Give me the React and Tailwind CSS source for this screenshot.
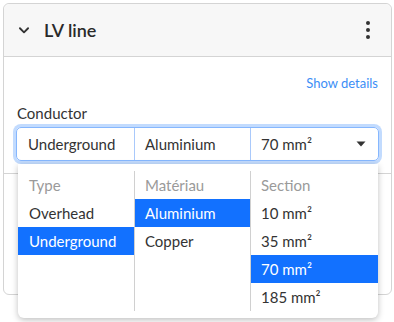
import React from "react";

const font = { fontFamily: "Lato, 'Open Sans', sans-serif" };

function Col({ title, items, selected, first, last }) {
  return (
    <div className={`flex flex-col ${last ? "flex-1" : "border-r border-[#d0d0d0]"} ${first ? "w-[117px]" : last ? "" : "w-[116px]"}`}>
      <div className={`h-[28px] flex items-center text-[15px] text-[#9a9a9a] ${first ? "pl-[11px]" : "pl-[10px]"}`}>{title}</div>
      {items.map((it) => (
        <div
          key={it}
          className={`h-[28px] flex items-center text-[15px] ${first ? "pl-[11px]" : "pl-[10px]"} ${it === selected ? "bg-[#1271ff] text-white" : "text-[#333333]"}`}
        >
          {it}
        </div>
      ))}
    </div>
  );
}

export default function App() {
  return (
    <div className="w-[394px] h-[322px] bg-white overflow-hidden pt-[3px] pl-[3px] pr-[2px]" style={font}>
      <div className="h-[292px] border border-[#d4d4d4] rounded-[6px] overflow-visible">
        <div className="h-[53px] bg-[#f7f7f7] border-b border-[#d4d4d4] rounded-t-[6px] flex items-center pl-[13px] pr-[21px]">
          <svg width="14" height="14" viewBox="0 0 24 24" fill="none" stroke="#333" strokeWidth="3.2" strokeLinecap="round" strokeLinejoin="round">
            <path d="M5 9l7 7 7-7" />
          </svg>
          <span className="ml-[13px] text-[18px] font-semibold text-[#2a2a2a]">LV line</span>
          <div className="ml-auto flex flex-col gap-[3px] items-center">
            <span className="w-[4px] h-[4px] rounded-full bg-[#333]" />
            <span className="w-[4px] h-[4px] rounded-full bg-[#333]" />
            <span className="w-[4px] h-[4px] rounded-full bg-[#333]" />
          </div>
        </div>
        <div className="px-[12px]">
          <div className="flex justify-end pt-[17px] h-[43px]">
            <span className="text-[13px] text-[#3b8ef6] mr-[1px]">Show details</span>
          </div>
          <div className="text-[15px] text-[#333] h-[27px] pt-[2px] ml-[1px]">Conductor</div>
          <div className="relative">
            <div className="flex h-[34px] border border-[#86b7fe] rounded-[5px] shadow-[0_0_0_3px_rgba(13,110,253,0.25)] text-[15px] text-[#333]">
              <div className="w-[118px] border-r border-[#a9c9fb] flex items-center pl-[11px]">Underground</div>
              <div className="w-[116px] border-r border-[#a9c9fb] flex items-center pl-[10px]">Aluminium</div>
              <div className="flex-1 flex items-center pl-[10px] pr-[12px]">
                <span>70 mm²</span>
                <svg className="ml-auto" width="10" height="6" viewBox="0 0 10 6">
                  <path d="M0.5 0.5 L9.5 0.5 L5 5.5 Z" fill="#333" />
                </svg>
              </div>
            </div>
            <div className="absolute left-[2px] top-[37px] w-[360px] h-[154px] bg-white rounded-b-[6px] shadow-[0_2px_6px_rgba(0,0,0,0.25)] flex py-[7px] z-10">
              <Col first title="Type" items={["Overhead", "Underground"]} selected="Underground" />
              <Col title="Matériau" items={["Aluminium", "Copper"]} selected="Aluminium" />
              <Col last title="Section" items={["10 mm²", "35 mm²", "70 mm²", "185 mm²"]} selected="70 mm²" />
            </div>
          </div>
        </div>
        <div className="mt-[12px] border-t border-[#d4d4d4]" />
      </div>
    </div>
  );
}
